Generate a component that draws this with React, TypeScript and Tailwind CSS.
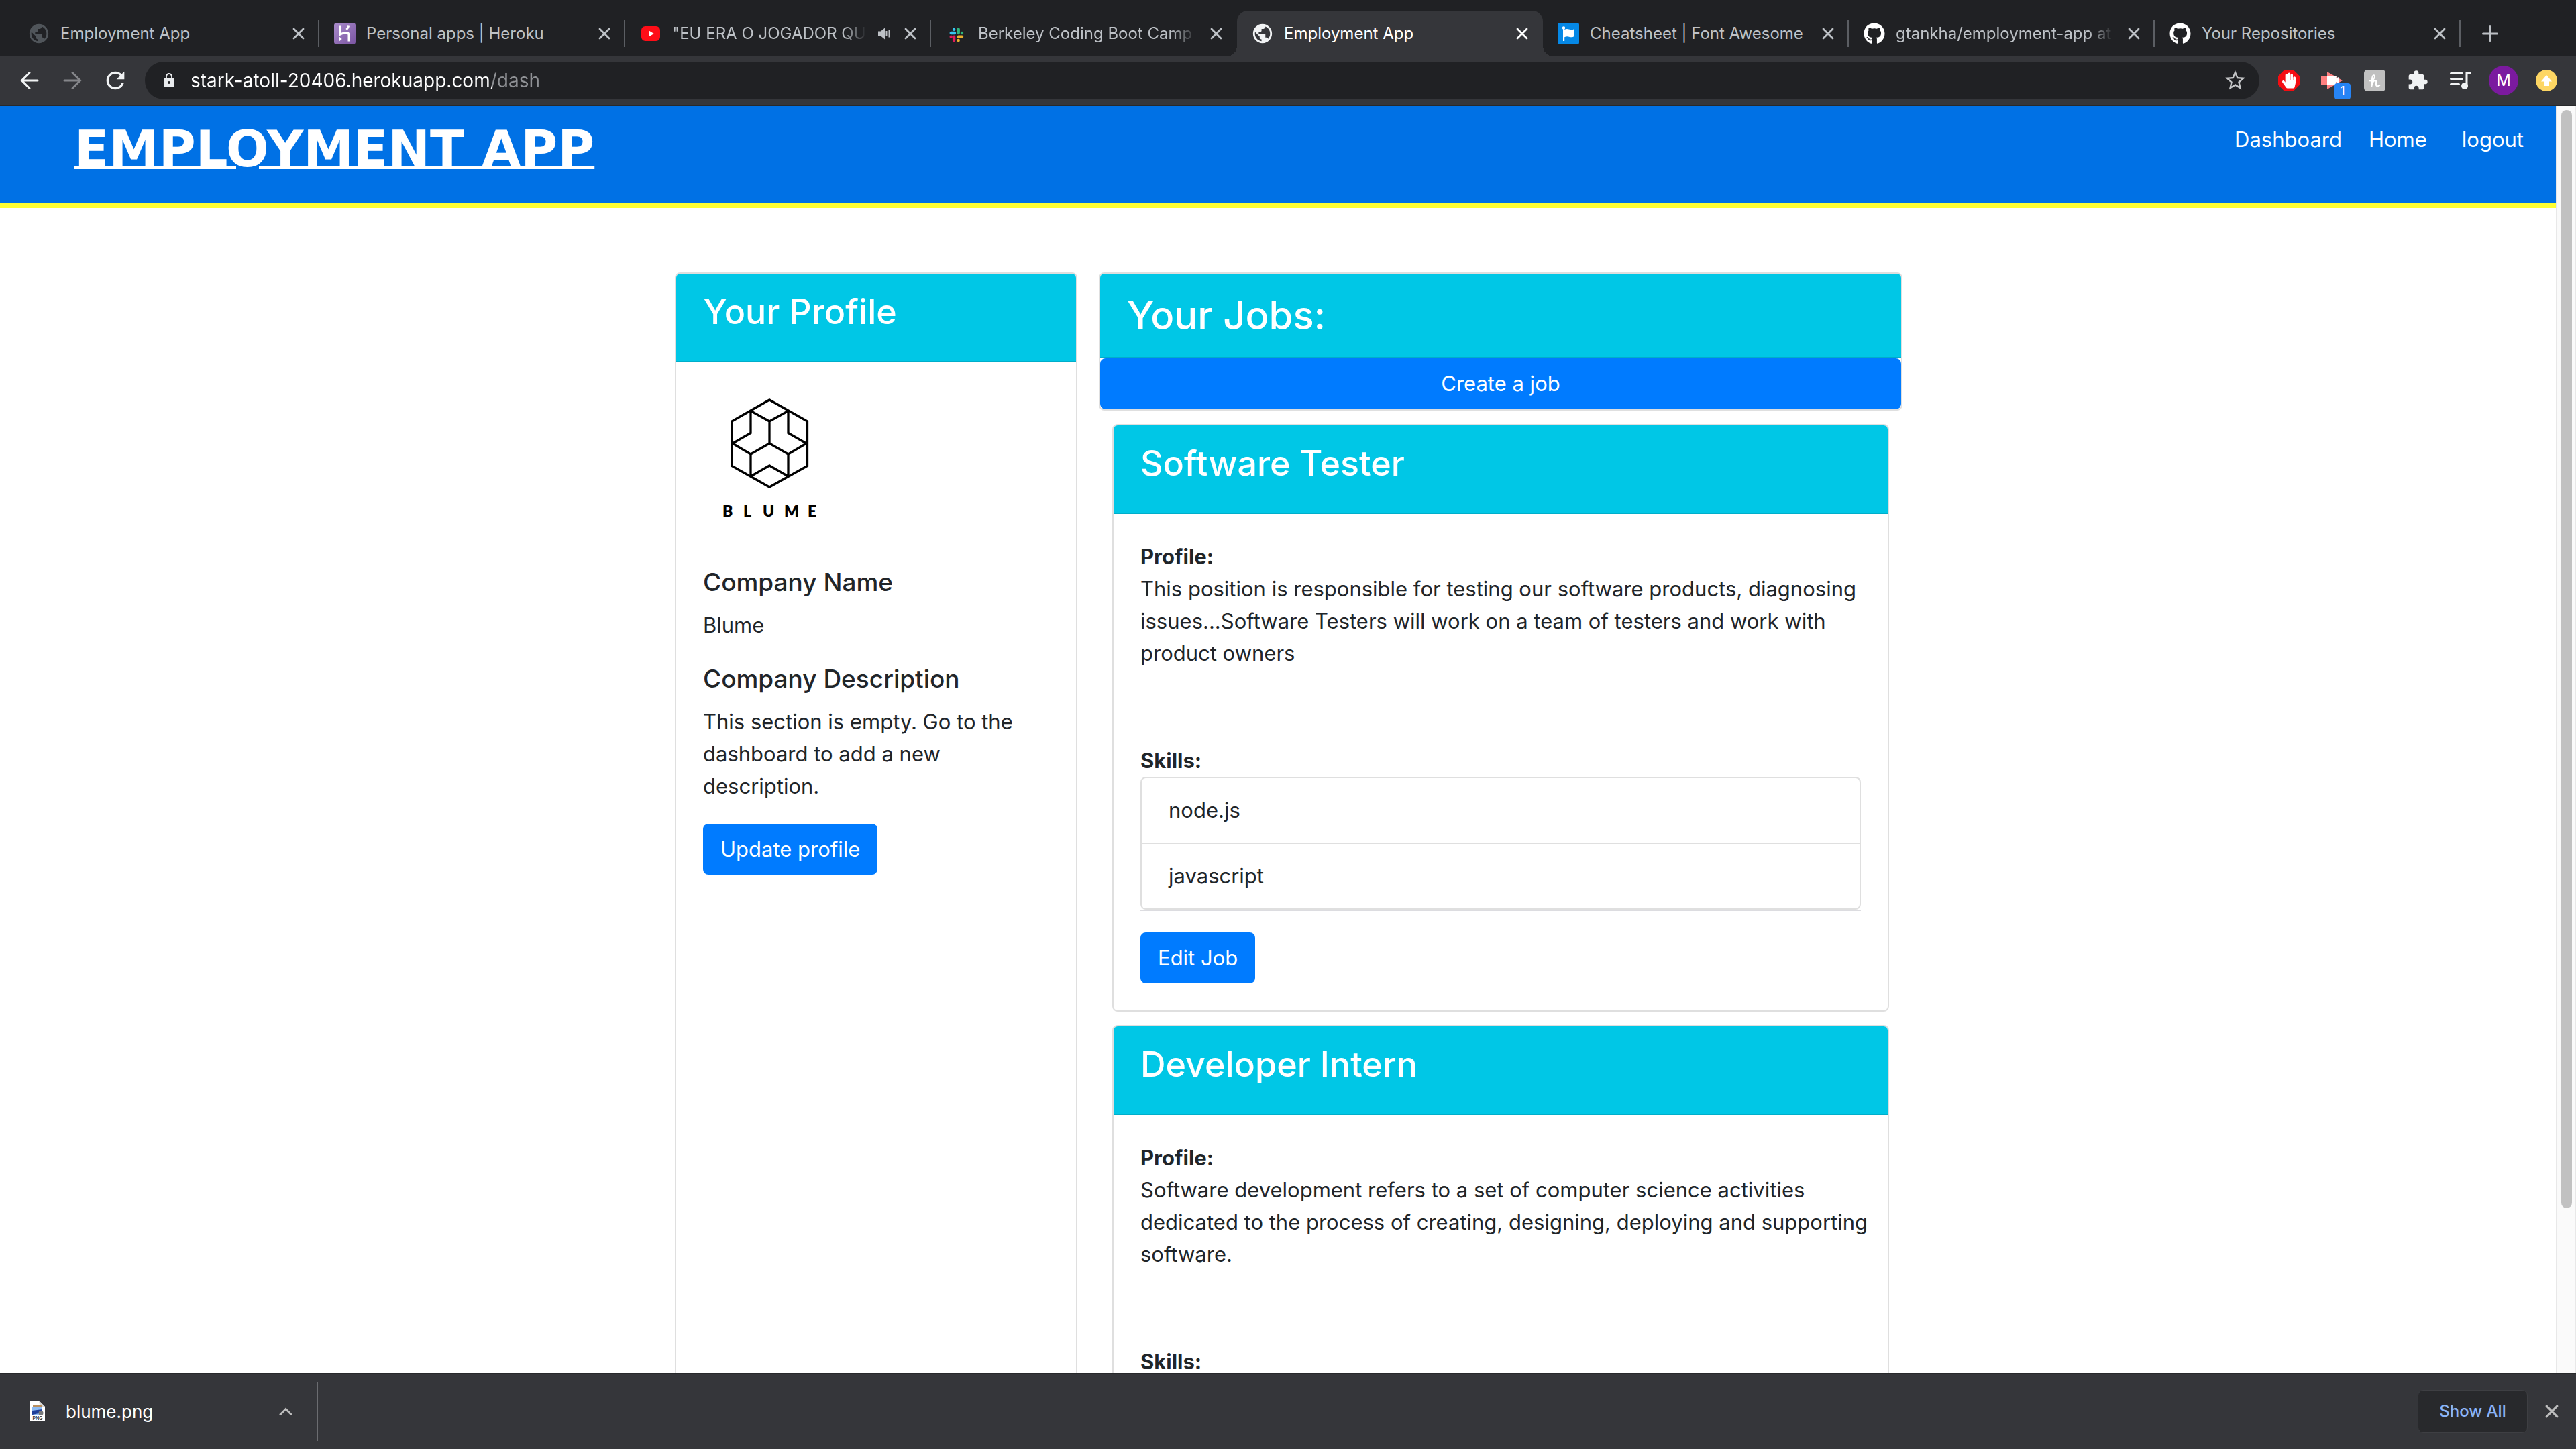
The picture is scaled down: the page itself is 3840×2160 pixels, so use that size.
import type { ReactNode } from "react";
import { FaGithub, FaHandPaper } from "react-icons/fa";
import { MdExtension, MdLock, MdPublic, MdQueueMusic, MdRefresh, MdStarBorder } from "react-icons/md";

function Heroku() {
  return (
    <svg viewBox="0 0 32 32" className="size-8" aria-hidden="true">
      <defs>
        <linearGradient id="heroku" x1="0" y1="0" x2="1" y2="1">
          <stop offset="0" stopColor="#a98bcb" />
          <stop offset="1" stopColor="#7a54a1" />
        </linearGradient>
      </defs>
      <rect width="32" height="32" rx="4" fill="url(#heroku)" />
      <path d="M9.500 4.500v12.500c3-1.600 6.500-2.500 9-2.500 2.600 0 3.500 1.200 3.500 3.500v9.500" fill="none" stroke="#fff" strokeWidth="3" />
      <path d="M18.500 10c1.700-1.700 2.800-3.500 3.100-5.500" fill="none" stroke="#fff" strokeWidth="3" />
      <path d="M8 20.800v6.400l3.700-3.200z" fill="#fff" />
    </svg>
  );
}

function Youtube() {
  return (
    <svg viewBox="0 0 32 32" className="size-8" aria-hidden="true">
      <rect x="2" y="5" width="28" height="22" rx="6" fill="#ff0d17" />
      <path d="M13 11.300v9.400l7.800-4.700z" fill="#fff" />
    </svg>
  );
}

function Slack() {
  return (
    <svg viewBox="0 0 32 32" className="size-8" aria-hidden="true">
      <g transform="translate(5.500 7.500) scale(.88)">
        <rect x="5" y="0" width="5" height="5" rx="2.500" fill="#36c5f0" />
        <rect x="0" y="6" width="11" height="5" rx="2.500" fill="#36c5f0" />
        <rect x="12.500" y="0" width="5" height="11" rx="2.500" fill="#2eb67d" />
        <rect x="18.500" y="6" width="5" height="5" rx="2.500" fill="#2eb67d" />
        <rect x="12.500" y="12.500" width="11" height="5" rx="2.500" fill="#ecb22e" />
        <rect x="12.500" y="18.500" width="5" height="5" rx="2.500" fill="#ecb22e" />
        <rect x="5" y="12.500" width="5" height="11" rx="2.500" fill="#e01e5a" />
        <rect x="0" y="12.500" width="5" height="5" rx="2.500" fill="#e01e5a" />
      </g>
    </svg>
  );
}

function FontAwesome() {
  return (
    <svg viewBox="0 0 32 32" className="size-8" aria-hidden="true">
      <rect width="32" height="32" rx="3" fill="#0588e6" />
      <circle cx="9" cy="7.500" r="2.200" fill="#fff" />
      <path d="M8 8h2.200v2c4-2 6.500-.3 9 .2 2.200.4 3.800-.2 5.800-1.200v11c-2.500 1.300-4.500 1.700-7 1-2.800-.8-5-1-7.800.2V27H8z" fill="#fff" />
    </svg>
  );
}

function Volume() {
  return (
    <svg viewBox="0 0 20 20" className="size-5 shrink-0 text-[#bdc1c6]" aria-hidden="true">
      <path d="M1 6.500h4l6-5v17l-6-5H1z" fill="currentColor" />
      <path d="M13.500 6v8M17.500 4.500v11" stroke="currentColor" strokeWidth="2" fill="none" />
    </svg>
  );
}

function Cross({ className }: { className: string }) {
  return (
    <svg viewBox="0 0 18 18" className={className} aria-hidden="true">
      <path d="M2 2l14 14M16 2L2 16" stroke="currentColor" strokeWidth="2.800" strokeLinecap="round" />
    </svg>
  );
}

type TabData = { title: string; icon: ReactNode; active?: boolean; fade?: boolean; audio?: boolean; divider?: boolean };

const tabs: TabData[] = [
  { title: "Employment App", icon: <MdPublic className="size-[34px] shrink-0 text-[#50555a]" />, divider: true },
  { title: "Personal apps | Heroku", icon: <Heroku />, divider: true },
  { title: "\"EU ERA O JOGADOR QU", icon: <Youtube />, divider: true, fade: true, audio: true },
  { title: "Berkeley Coding Boot Camp ·", icon: <Slack />, fade: true },
  { title: "Employment App", icon: <MdPublic className="size-[34px] shrink-0 text-[#f1f3f4]" />, active: true },
  { title: "Cheatsheet | Font Awesome", icon: <FontAwesome />, divider: true },
  { title: "gtankha/employment-app at", icon: <FaGithub className="size-8 text-white" />, divider: true, fade: true },
  { title: "Your Repositories", icon: <FaGithub className="size-8 text-white" />, divider: true },
];

function Tab({ tab }: { tab: TabData }) {
  return (
    <div
      className={
        tab.active
          ? "relative flex h-full max-w-[456px] min-w-0 flex-1 items-center rounded-t-2xl bg-[#35363a] pl-[22px] text-white"
          : "relative flex h-full max-w-[456px] min-w-0 flex-1 items-center pl-[22px] text-[#bdc1c6]"
      }
    >
      {tab.active && (
        <>
          <span className="absolute bottom-0 -left-4 size-4 bg-[radial-gradient(circle_at_top_left,transparent_16px,#35363a_16px)]" />
          <span className="absolute -right-4 bottom-0 size-4 bg-[radial-gradient(circle_at_top_right,transparent_16px,#35363a_16px)]" />
        </>
      )}
      <button
        type="button"
        role="tab"
        aria-selected={!!tab.active}
        className="flex min-w-0 flex-1 items-center gap-4 text-left text-2xl"
      >
        <span className="flex size-8 shrink-0 items-center justify-center">{tab.icon}</span>
        <span
          className={
            tab.fade
              ? "min-w-0 flex-1 overflow-hidden whitespace-nowrap [mask-image:linear-gradient(to_right,black_88%,transparent)]"
              : "min-w-0 flex-1 overflow-hidden whitespace-nowrap"
          }
        >
          {tab.title}
        </span>
        {tab.audio && <Volume />}
      </button>
      <button type="button" aria-label="Close tab" className="flex w-[58px] shrink-0 justify-center">
        <Cross className="size-[18px]" />
      </button>
      <span className={tab.divider ? "h-10 w-0.5 bg-[#5b5e63]" : "h-10 w-0.5"} />
    </div>
  );
}

function TabStrip() {
  return (
    <div className="flex h-[84px] bg-[#202124] pt-4 pl-5" role="tablist">
      {tabs.map((tab, i) => (
        <Tab key={i} tab={tab} />
      ))}
      <button type="button" aria-label="New tab" className="flex w-[88px] items-center justify-center text-[#bdc1c6]">
        <svg viewBox="0 0 24 24" className="size-6" aria-hidden="true">
          <path d="M12 1.500v21M1.500 12h21" stroke="currentColor" strokeWidth="3" strokeLinecap="round" />
        </svg>
      </button>
    </div>
  );
}

function ToolButton({ label, children }: { label: string; children: ReactNode }) {
  return (
    <button type="button" aria-label={label} className="relative flex h-14 w-16 shrink-0 items-center justify-center text-[#f1f3f4]">
      {children}
    </button>
  );
}

function Toolbar() {
  return (
    <div className="flex h-[74px] items-center border-b-2 border-[#28292b] bg-[#35363a] px-3">
      <ToolButton label="Back">
        <svg viewBox="0 0 28 28" className="size-7" aria-hidden="true">
          <path d="M26 14H3M14 2.500L2.500 14 14 25.500" fill="none" stroke="currentColor" strokeWidth="3" strokeLinecap="round" />
        </svg>
      </ToolButton>
      <ToolButton label="Forward">
        <svg viewBox="0 0 28 28" className="size-7 text-[#85868a]" aria-hidden="true">
          <path d="M2 14h23M14 2.500L25.500 14 14 25.500" fill="none" stroke="currentColor" strokeWidth="3" strokeLinecap="round" />
        </svg>
      </ToolButton>
      <ToolButton label="Reload">
        <MdRefresh className="size-10" />
      </ToolButton>
      <div className="mx-3 flex h-14 flex-1 items-center gap-5 rounded-full bg-[#202124] pr-[18px] pl-6">
        <MdLock className="size-6 shrink-0 text-[#e8eaed]" />
        <input
          type="text"
          aria-label="Address"
          defaultValue="stark-atoll-20406.herokuapp.com/dash"
          className="min-w-0 flex-1 bg-[linear-gradient(to_right,#ffffff_450px,#8f9195_450px)] bg-clip-text text-[28px] leading-10 text-transparent outline-none"
        />
        <button type="button" aria-label="Bookmark this page">
          <MdStarBorder className="size-9 text-[#c4c5c7]" />
        </button>
      </div>
      <ToolButton label="Ad blocker">
        <svg viewBox="0 0 32 32" className="absolute size-8" aria-hidden="true">
          <path d="M9.500 0h13L32 9.500v13L22.500 32h-13L0 22.500v-13z" fill="#f40d12" />
        </svg>
        <FaHandPaper className="relative h-6 w-5 text-white" />
      </ToolButton>
      <ToolButton label="Video downloader">
        <svg viewBox="0 0 32 32" className="size-8" aria-hidden="true">
          <path d="M0 10h9V3l23 13-23 13v-7H0z" fill="#ff8080" />
          <path d="M9 10h14l-1 3 4-2v9l-4-2v4H9z" fill="#fff" />
        </svg>
        <span className="absolute right-1 bottom-0 flex size-6 items-center justify-center rounded bg-[#2684f5] text-lg leading-6 text-white">1</span>
      </ToolButton>
      <ToolButton label="Honey">
        <svg viewBox="0 0 32 32" className="size-8" aria-hidden="true">
          <rect width="32" height="32" rx="5" fill="#c0c0c0" />
          <path
            d="M9 16.500c3.500-1 7-3.500 7-6.500 0-2.800-3-2.200-3.600 1.500-.5 3.300-.7 8-1.100 13 .8-4.500 3-8.500 5.500-8.500 2.800 0 .6 4.500 1.200 6.800.6 2 3.200 2 5.200.4"
            fill="none"
            stroke="#fff"
            strokeWidth="2.200"
            strokeLinecap="round"
            strokeLinejoin="round"
          />
        </svg>
      </ToolButton>
      <ToolButton label="Extensions">
        <MdExtension className="size-8" />
      </ToolButton>
      <ToolButton label="Media controls">
        <svg viewBox="0 0 32 28" className="h-7 w-8" aria-hidden="true">
          <path d="M1.500 3.500h17M1.500 11.500h17M1.500 19.500h12" stroke="currentColor" strokeWidth="3" strokeLinecap="round" />
          <path d="M25 22V3.500h6" fill="none" stroke="currentColor" strokeWidth="3" strokeLinecap="round" />
          <circle cx="22" cy="22" r="5" fill="currentColor" />
        </svg>
      </ToolButton>
      <ToolButton label="Account">
        <span className="flex size-11 items-center justify-center rounded-full bg-[#7b1a9f] text-2xl text-white">M</span>
      </ToolButton>
      <ToolButton label="Update">
        <svg viewBox="0 0 32 32" className="size-8" aria-hidden="true">
          <circle cx="16" cy="16" r="16" fill="#fdd663" />
          <path d="M16 8l8 9.500h-4V24h-8v-6.500H8z" fill="#fff" />
        </svg>
      </ToolButton>
    </div>
  );
}

function BlumeLogo() {
  return (
    <svg viewBox="-2 1 200 264" className="h-[264px] w-[200px]" role="img" aria-label="Blume logo">
      <g fill="none" stroke="#000" strokeWidth="3.300">
        <path d="M97 17l56.500 32v66.500L97 147l-56-31.500V49z" />
        <path d="M69 33.500L97 49l28-15.500M97 49v33M69 33.500v33L42 82M125 33.500v33L152 82" />
        <path d="M42 82l27 16 28-16 28 16 27-16M69 98v33M125 98v33M69 131l28-16 28 16" />
      </g>
      <text y="190.500" x="27 58 87 119 154" fontFamily="Lato, sans-serif" fontWeight="800" fontSize="23" fill="#000">
        BLUME
      </text>
    </svg>
  );
}

const cardHeader = "border-b-2 border-[#00aeca] bg-[#00c7e6] px-10 py-6 font-medium text-white";
const primaryButton = "rounded-lg bg-[#007bff] px-[26px] py-3.5 text-[31px] leading-[48px] text-white";

function ProfileCard() {
  return (
    <section className="overflow-hidden rounded-lg border-2 border-[#dfdfdf] bg-white">
      <header className={cardHeader}>
        <h3 className="mb-4 text-[52px] leading-[66px]">Your Profile</h3>
      </header>
      <div className="p-10">
        <BlumeLogo />
        <h5 className="mb-4 text-[37px] leading-[48px] font-medium">Company Name</h5>
        <p className="mb-8">Blume</p>
        <h5 className="mb-4 text-[37px] leading-[48px] font-medium">Company Description</h5>
        <p className="mb-8">This section is empty. Go to the dashboard to add a new description.</p>
        <button type="button" className={primaryButton}>Update profile</button>
      </div>
    </section>
  );
}

type Job = { title: string; profile: string; skills: string[] };

const jobs: Job[] = [
  {
    title: "Software Tester",
    profile:
      "This position is responsible for testing our software products, diagnosing\nissues...Software Testers will work on a team of testers and work with\nproduct owners",
    skills: ["node.js", "javascript"],
  },
  {
    title: "Developer Intern",
    profile:
      "Software development refers to a set of computer science activities\ndedicated to the process of creating, designing, deploying and supporting\nsoftware.",
    skills: [],
  },
];

function JobCard({ job }: { job: Job }) {
  return (
    <article className="mx-5 overflow-hidden rounded-lg border-2 border-[#dfdfdf] bg-white">
      <header className={cardHeader}>
        <h3 className="mb-4 text-[52px] leading-[66px]">{job.title}</h3>
      </header>
      <div className="p-10">
        <h6 className="font-bold">Profile:</h6>
        <p className="mb-28 whitespace-pre">{job.profile}</p>
        <h6 className="font-bold">Skills:</h6>
        <ul className="mb-8 border-b-2 border-[#dcdce0]">
          {job.skills.map((skill) => (
            <li key={skill} className="border-2 border-[#dfdfdf] px-10 py-6 first:rounded-t-lg last:rounded-b-lg not-first:border-t-0">
              {skill}
            </li>
          ))}
        </ul>
        <button type="button" className={primaryButton}>Edit Job</button>
      </div>
    </article>
  );
}

function Page() {
  return (
    <div className="min-w-0 flex-1 overflow-hidden bg-white text-[31px] leading-[48px] text-[#212529]">
      <header className="flex h-[152px] items-start justify-between border-b-8 border-[#ffff33] bg-[#0071e5] pr-12 pl-[111px] text-white">
        <a
          href="#home"
          className="mt-5 font-['DejaVu_Sans'] text-[75px] leading-[88px] font-bold underline decoration-4 underline-offset-0"
        >
          EMPLOYMENT APP
        </a>
        <nav className="mt-[26px] flex gap-10">
          <a href="#dashboard">Dashboard</a>
          <a href="#home">Home</a>
          <button type="button" className="ml-3">logout</button>
        </nav>
      </header>
      <main className="mx-auto grid max-w-[1862px] grid-cols-[minmax(0,600fr)_minmax(0,1198fr)] gap-8 pt-24 pl-8">
        <ProfileCard />
        <div className="flex flex-col gap-5">
          <section className="overflow-hidden rounded-lg border-2 border-[#dfdfdf] bg-white">
            <header className={cardHeader}>
              <h2 className="text-[58px] leading-[76px]">Your Jobs:</h2>
            </header>
            <button type="button" className="block w-full rounded-lg bg-[#007bff] py-3.5 text-white">Create a job</button>
          </section>
          {jobs.map((job) => (
            <JobCard key={job.title} job={job} />
          ))}
        </div>
      </main>
    </div>
  );
}

function DownloadBar() {
  return (
    <footer className="flex h-[114px] shrink-0 items-center justify-between border-t-2 border-[#28292b] bg-[#35363a] pr-3">
      <button type="button" className="flex h-[88px] w-[474px] items-center border-r-2 border-[#6b6c70] pr-9 pl-11 text-[26px] text-white">
        <svg viewBox="0 0 24 32" className="h-8 w-6" aria-hidden="true">
          <path d="M1 0h13l9 9v21H1z" fill="#fff" />
          <path d="M14 0l9 9h-6q-2-1-3-9z" fill="#d5d5d5" />
          <rect x="5" y="7" width="14" height="14" fill="#b98f5e" />
          <rect x="4" y="9" width="15" height="12" fill="#8dbbf3" />
          <path d="M4 15l15-2v5l-15 3z" fill="#1e3f9a" />
          <circle cx="17" cy="18.500" r="3.500" fill="#77797c" />
          <text x="12" y="28.500" textAnchor="middle" fontSize="7" fontWeight="600" fontFamily="Inter, sans-serif" fill="#333">PNG</text>
        </svg>
        <span className="ml-[30px] flex-1 text-left">blume.png</span>
        <svg viewBox="0 0 20 12" className="h-3 w-5" aria-hidden="true">
          <path d="M2 10.500l8-8 8 8" fill="none" stroke="#bdbdbd" strokeWidth="3" strokeLinecap="round" />
        </svg>
      </button>
      <div className="flex items-center">
        <button type="button" className="h-16 w-[164px] rounded-lg border border-[#3e3f43] bg-[#28292c] text-2xl font-medium text-[#8ab4f8]">
          Show All
        </button>
        <button type="button" aria-label="Close downloads bar" className="ml-3 flex size-12 items-center justify-center text-[#bdbdbd]">
          <Cross className="size-5" />
        </button>
      </div>
    </footer>
  );
}

export default function App() {
  return (
    <div className="flex h-screen flex-col overflow-hidden font-['Inter',sans-serif]">
      <TabStrip />
      <Toolbar />
      <div className="flex min-h-0 flex-1">
        <Page />
        <div className="w-[30px] border-x-2 border-[#e8e8e8] bg-[#fafafa] px-1.5 pt-1.5">
          <div className="mx-auto h-[87%] w-4 rounded-full bg-[#c1c1c1]" />
        </div>
      </div>
      <DownloadBar />
    </div>
  );
}
